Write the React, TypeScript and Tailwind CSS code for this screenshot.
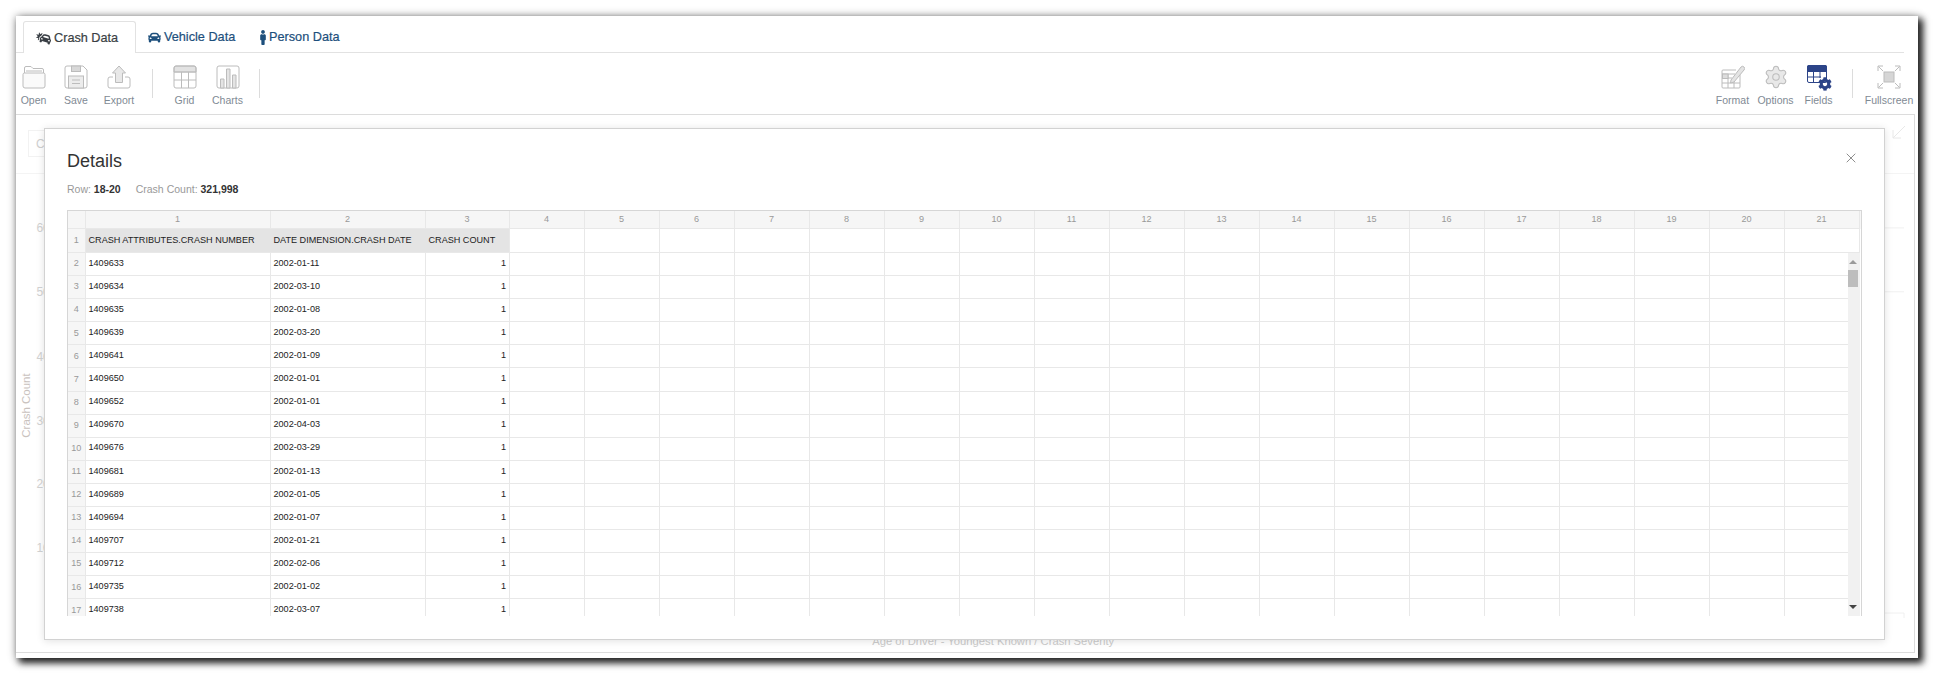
import React from "react";
import { FaCarCrash, FaCar, FaMale, FaCog } from "react-icons/fa";
import { Settings, X } from "lucide-react";

const S = "#bcbcbc";

const Open = () => (
  <svg width="24" height="24" viewBox="0 0 24 24" fill="none" stroke={S} strokeWidth="1">
    <path d="M2.500 8V3Q2.500 1.500 4 1.500H9L11 3.500H20Q21.500 3.500 21.500 5V8" />
    <path d="M4 6H20" />
    <path d="M1 9.500Q1 8 2.500 8H21.500Q23 8 23 9.500V21Q23 23 21 23H3Q1 23 1 21Z" fill="#fafafa" />
  </svg>
);
const Save = () => (
  <svg width="24" height="24" viewBox="0 0 24 24" fill="none" stroke={S} strokeWidth="1">
    <path d="M3 1H19L23 5V21Q23 23 21 23H3Q1 23 1 21V3Q1 1 3 1Z" />
    <rect x="7.500" y="1" width="9" height="5.500" fill="#d8d8d8" />
    <rect x="4.500" y="11" width="15" height="12" fill="#ececec" />
    <path d="M8 15H16M8 18.500H16" />
  </svg>
);
const Export = () => (
  <svg width="24" height="24" viewBox="0 0 24 24" fill="none" stroke={S} strokeWidth="1">
    <path d="M6 12H3Q1 12 1 14V21Q1 23 3 23H21Q23 23 23 21V14Q23 12 21 12H18" />
    <path d="M12 1L18.500 8H15.500V17.500H8.500V8H5.500Z" fill="#e8e8e8" />
  </svg>
);
const Grid = () => (
  <svg width="24" height="24" viewBox="0 0 24 24" fill="none" stroke={S} strokeWidth="1">
    <path d="M1 7V3Q1 1 3 1H21Q23 1 23 3V7Z" fill="#e2e2e2" />
    <rect x="1" y="1" width="22" height="22" rx="2" />
    <path d="M1 7H23M1 15H23M8.500 7V23M15.500 7V23" />
  </svg>
);
const Charts = () => (
  <svg width="24" height="24" viewBox="0 0 24 24" fill="none" stroke={S} strokeWidth="1">
    <rect x="1" y="1" width="22" height="22" rx="2" />
    <path d="M4.500 23V14H8V23ZM10.500 23V4H14V23ZM16.500 23V10H20V23Z" fill="#e4e4e4" />
  </svg>
);
const Format = () => (
  <svg width="24" height="24" viewBox="0 0 24 24" fill="none" stroke={S} strokeWidth="1">
    <path d="M19 10V22Q19 23 18 23H2Q1 23 1 22V6Q1 5 2 5H15" />
    <path d="M1 9H14M1 13H11M1 18H19M7 9V23M13 15V23" />
    <rect x="1.500" y="9" width="5.500" height="4.500" fill="#dddddd" />
    <path d="M10 15L20 2Q21.500 0.500 23 2T23 5L13 17L9.500 18Z" fill="#e4e4e4" />
  </svg>
);
const Fields = () => (
  <div className="relative h-6 w-6">
    <svg width="24" height="24" viewBox="0 0 24 24" fill="none">
      <path d="M0 7V2Q0 0 2 0H18Q20 0 20 2V7Z" fill="#2c4488" />
      <rect x="0.500" y="0.500" width="19" height="17" rx="1.500" stroke="#2c4488" />
      <path d="M0 12H14M6.500 7V18M13 7V13" stroke="#2c4488" strokeWidth="1" />
    </svg>
    <FaCog className="absolute -right-[1.500px] -bottom-[2px] h-[14px] w-[14px] text-[#2c4488]" />
  </div>
);
const Fullscreen = () => (
  <svg width="24" height="24" viewBox="0 0 24 24" fill="none" stroke={S} strokeWidth="1">
    <rect x="7" y="7" width="10" height="10" fill="#d6d6d6" />
    <path d="M6 6L1.500 1.500M1 6V1H6M18 6L22.500 1.500M18 1H23V6M6 18L1.500 22.500M1 18V23H6M18 18L22.500 22.500M23 18V23H18" />
  </svg>
);
const Cog = () => <Settings size={26} strokeWidth={1} color={S} fill="#e8e8e8" />;

const Sep = ({ cls }: { cls: string }) => <div className={`h-[29px] w-px self-start mt-[16px] bg-[#dcdcdc] ${cls}`} />;

const Tool = ({ label, w, icon }: { label: string; w: string; icon: React.ReactNode }) => (
  <div className={`flex flex-col items-center shrink-0 pt-[12px] ${w}`}>
    <div className="flex h-6 items-center justify-center">{icon}</div>
    <div className="mt-[4px] text-[10.500px] leading-[14px] text-[#7f8a94] whitespace-nowrap">{label}</div>
  </div>
);

const rows: [string, string][] = [
  ["1409633", "2002-01-11"],
  ["1409634", "2002-03-10"],
  ["1409635", "2002-01-08"],
  ["1409639", "2002-03-20"],
  ["1409641", "2002-01-09"],
  ["1409650", "2002-01-01"],
  ["1409652", "2002-01-01"],
  ["1409670", "2002-04-03"],
  ["1409676", "2002-03-29"],
  ["1409681", "2002-01-13"],
  ["1409689", "2002-01-05"],
  ["1409694", "2002-01-07"],
  ["1409707", "2002-01-21"],
  ["1409712", "2002-02-06"],
  ["1409735", "2002-01-02"],
  ["1409738", "2002-03-07"],
];
const extra = Array.from({ length: 18 }, (_, i) => i);
const rowCols = "grid grid-cols-[17.500px_185px_155px_84px_repeat(18,75px)]";
const cell = "border-r border-b border-[#e8e8e8] overflow-hidden whitespace-nowrap flex items-center";

export default function App() {
  return (
    <div className="h-[675px] w-[1935px] overflow-hidden bg-white pt-4 pl-4 font-['Liberation_Sans',Arial,sans-serif]">
      <div className="relative flex h-[642px] w-[1902px] flex-col bg-white shadow-[4px_4px_7px_1px_#222222,0_0_9px_rgba(0,0,0,0.3)]">
        {/* tabs */}
        <div className="mr-[14px] flex h-[37px] items-end border-b border-[#e2e2e2] pl-[7px] text-[12.700px] [-webkit-text-stroke:0.2px]">
          <div className="-mb-px flex h-[32px] w-[113px] items-center gap-[3px] rounded-t-[3px] border border-b-0 border-[#e2e2e2] bg-white pt-[2px] pl-[12px] text-[#3a3f45]">
            <FaCarCrash className="h-[15px] w-[15px]" />
            <span>Crash Data</span>
          </div>
          <div className="flex h-[31px] w-[113px] items-center gap-[3px] pt-[2px] pl-[12px] text-[#1d4f7c]">
            <FaCar className="h-[13px] w-[13px]" />
            <span>Vehicle Data</span>
          </div>
          <div className="flex h-[31px] items-center gap-[2px] pt-[2px] pl-[10px] text-[#1d4f7c]">
            <FaMale className="h-[15px] w-[8px]" />
            <span>Person Data</span>
          </div>
        </div>
        {/* toolbar */}
        <div className="flex h-[61px] items-start">
          <Tool label="Open" w="w-[35px]" icon={<Open />} />
          <Tool label="Save" w="w-[50px]" icon={<Save />} />
          <Tool label="Export" w="w-[36px]" icon={<Export />} />
          <Sep cls="ml-[15px]" />
          <Tool label="Grid" w="w-[43px] ml-[10px]" icon={<Grid />} />
          <Tool label="Charts" w="w-[43px]" icon={<Charts />} />
          <Sep cls="ml-[10px]" />
          <div className="flex-1" />
          <Tool label="Format" w="w-[43px]" icon={<Format />} />
          <Tool label="Options" w="w-[43px]" icon={<Cog />} />
          <Tool label="Fields" w="w-[43px]" icon={<Fields />} />
          <Sep cls="ml-[12px]" />
          <Tool label="Fullscreen" w="w-[52px] ml-[10px] mr-[3px]" icon={<Fullscreen />} />
        </div>
        {/* faded pane behind the dialog */}
        <div className="mr-[3px] mb-[5px] flex min-h-0 flex-1 flex-col border-y border-r border-[#dcdcdc]">
          <div className="flex h-[59px] shrink-0 items-start justify-between border-b border-[#f4f4f4] pt-[15px] pl-[12px]">
            <div className="flex h-[27px] w-[300px] items-center border border-[#f2f2f2] pl-[7px] text-[12px] text-[#cfcfcf]">Crash Severity</div>
            <svg width="14" height="14" viewBox="0 0 14 14" fill="none" stroke="#e8e8e8" className="mt-[-5px] mr-[8px]">
              <path d="M13 1L1 13M1 5V13H9M13 1" />
            </svg>
          </div>
          <svg className="min-h-0 flex-1" width="1897" height="479" viewBox="0 0 1897 479" fill="none">
            <g fontFamily="Liberation Sans, Arial, sans-serif" stroke="none">
              <g fill="#d2d2d2" fontSize="12">
                <text x="18.500" y="58">60</text>
                <text x="18.500" y="122">50</text>
                <text x="18.500" y="187">40</text>
                <text x="18.500" y="252">30</text>
                <text x="18.500" y="315">20</text>
                <text x="18.500" y="379">10</text>
              </g>
              <text transform="translate(12 232) rotate(-90)" textAnchor="middle" fontSize="11.500" fill="#c9c2be">Crash Count</text>
              <text x="856" y="472" fontSize="11.250" fill="#cccccc">Age of Driver - Youngest Known / Crash Severity</text>
            </g>
            <path d="M1868 54H1890M1868 118H1890M1868 440H1890V445" stroke="#f0f0f0" />
          </svg>
        </div>

        {/* dialog */}
        <div className="absolute top-[112px] left-[28px] flex h-[512px] w-[1841px] flex-col border border-[#d2d2d2] bg-white pt-[20px] pr-[22px] pl-[22px] shadow-[0_1px_8px_rgba(0,0,0,0.12)]">
          <div className="flex items-start justify-between">
            <div className="text-[18px] leading-[24px] text-[#333333]">Details</div>
            <X size={16} strokeWidth={1} color="#555555" className="mt-[1px] mr-[3px]" />
          </div>
          <div className="mt-[9px] flex gap-[15px] text-[10.500px] leading-[14px] text-[#999999]">
            <span>Row: <b className="text-[#333333]">18-20</b></span>
            <span>Crash Count: <b className="text-[#333333]">321,998</b></span>
          </div>
          {/* pivot grid */}
          <div className="relative mt-[14px] h-[406px] w-[1795px] shrink-0 overflow-hidden border-x border-t border-[#d6d6d6] text-[9.100px] text-[#222222]">
            <div className={`${rowCols} h-[18px] bg-[#f6f6f6] text-[#999999]`}>
              <div className={cell} />
              {Array.from({ length: 21 }, (_, i) => (
                <div key={i} className={`${cell} justify-center`}>{i + 1}</div>
              ))}
            </div>
            <div className={`${rowCols} h-[24px]`}>
              <div className={`${cell} justify-center bg-[#f6f6f6] text-[#999999]`}>1</div>
              <div className={`${cell} border-r-0 bg-[#e4e4e4] pl-[3px]`}>CRASH ATTRIBUTES.CRASH NUMBER</div>
              <div className={`${cell} border-r-0 bg-[#e4e4e4] pl-[3px]`}>DATE DIMENSION.CRASH DATE</div>
              <div className={`${cell} bg-[#e4e4e4] pl-[3px]`}>CRASH COUNT</div>
              {extra.map((i) => <div key={i} className={cell} />)}
            </div>
            {rows.map(([a, b], r) => (
              <div key={a} className={`${rowCols} h-[23.100px]`}>
                <div className={`${cell} justify-center bg-[#f6f6f6] text-[#999999]`}>{r + 2}</div>
                <div className={`${cell} pb-px pl-[3px]`}>{a}</div>
                <div className={`${cell} pb-px pl-[3px]`}>{b}</div>
                <div className={`${cell} pb-px justify-end pr-[2.500px]`}>1</div>
                {extra.map((i) => <div key={i} className={cell} />)}
              </div>
            ))}
            <div className="absolute top-[42px] right-[1px] bottom-0 flex w-[12px] flex-col items-start bg-[#f1f1f1]">
              <div className="mt-[7px] ml-[1px] h-0 w-0 border-x-[4px] border-b-[4px] border-x-transparent border-b-[#9a9a9a]" />
              <div className="mt-[6px] h-[17px] w-[10px] bg-[#bdbdbd]" />
              <div className="mt-auto mb-[7px] ml-[1px] h-0 w-0 border-x-[4px] border-t-[4px] border-x-transparent border-t-[#444444]" />
            </div>
          </div>
        </div>
      </div>
    </div>
  );
}
